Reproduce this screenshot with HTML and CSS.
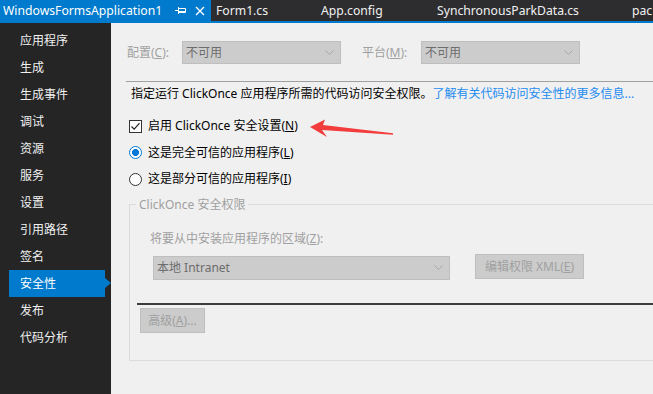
FILE: index.html
```html
<!DOCTYPE html>
<html>
<head>
	<meta charset="utf-8">
	<title>WindowsFormsApplication1 - 安全性</title>
	<link rel="stylesheet" href="styles.css">
</head>
<body>
	<div id="tabBar">
		<div class="tab activeTab">
			<span class="tabTitle">WindowsFormsApplication1</span>
			<svg class="tabIcon" width="12" height="10" viewBox="0 0 12 10">
				<path d="M0 4.5 H3.5 M3.5 1 V8 M3.5 2.5 H10.5 V6.5 H3.5 M3.5 5.5 H10.5" stroke="#fff" stroke-width="1" fill="none"/>
			</svg>
			<svg class="tabIcon closeIcon" width="10" height="10" viewBox="0 0 10 10">
				<path d="M1 1 L9 9 M9 1 L1 9" stroke="#fff" stroke-width="1.4" fill="none"/>
			</svg>
		</div>
		<div class="tab tabForm">Form1.cs</div>
		<div class="tab tabConfig">App.config</div>
		<div class="tab tabSync">SynchronousParkData.cs</div>
		<div class="tab">pac</div>
	</div>

	<div id="main">
		<ul id="sideMenu">
			<li>应用程序</li>
			<li>生成</li>
			<li>生成事件</li>
			<li>调试</li>
			<li>资源</li>
			<li>服务</li>
			<li>设置</li>
			<li>引用路径</li>
			<li>签名</li>
			<li class="selected">安全性</li>
			<li>发布</li>
			<li>代码分析</li>
		</ul>

		<div id="content">
			<div class="configRow">
				<span class="disabledLabel cfgLabel">配置(<u>C</u>):</span>
				<div class="comboBox">
					<span>不可用</span>
					<svg class="chevron" width="9" height="6" viewBox="0 0 9 6"><path d="M0.5 0.5 L4.5 4.5 L8.5 0.5" stroke="#a8a8a8" fill="none"/></svg>
				</div>
				<span class="disabledLabel platLabel">平台(<u>M</u>):</span>
				<div class="comboBox">
					<span>不可用</span>
					<svg class="chevron" width="9" height="6" viewBox="0 0 9 6"><path d="M0.5 0.5 L4.5 4.5 L8.5 0.5" stroke="#a8a8a8" fill="none"/></svg>
				</div>
			</div>

			<div class="separator"></div>

			<p class="description">指定运行 ClickOnce 应用程序所需的代码访问安全权限。<a href="#">了解有关代码访问安全性的更多信息...</a></p>

			<div class="optionRow checkRow">
				<span class="checkbox">
					<svg width="11" height="11" viewBox="0 0 11 11"><path d="M1.5 5.5 L4.2 8.2 L9.5 2.2" stroke="#222" stroke-width="1.2" fill="none"/></svg>
				</span>
				<span>启用 ClickOnce 安全设置(<u>N</u>)</span>
			</div>
			<div class="optionRow">
				<span class="radio radioOn"></span>
				<span>这是完全可信的应用程序(<u>L</u>)</span>
			</div>
			<div class="optionRow">
				<span class="radio"></span>
				<span>这是部分可信的应用程序(<u>I</u>)</span>
			</div>

			<fieldset class="permGroup">
				<legend>ClickOnce 安全权限</legend>
				<p class="disabledLabel zoneLabel">将要从中安装应用程序的区域(<u>Z</u>):</p>
				<div class="zoneRow">
					<div class="comboBox zoneCombo">
						<span>本地 Intranet</span>
						<svg class="chevron" width="9" height="6" viewBox="0 0 9 6"><path d="M0.5 0.5 L4.5 4.5 L8.5 0.5" stroke="#a8a8a8" fill="none"/></svg>
					</div>
					<button class="disabledButton xmlButton">编辑权限 XML(<u>E</u>)</button>
				</div>
				<div class="darkLine"></div>
				<button class="disabledButton advButton">高级(<u>A</u>)...</button>
			</fieldset>
		</div>
	</div>

	<!-- red annotation arrow drawn on top of the screenshot -->
	<svg id="arrow" width="100" height="26" viewBox="0 0 100 26">
		<polygon points="10,12 25,4.5 23,10 93,18.2 93,19.8 22,15 27,22" fill="#f33c3c"/>
	</svg>
</body>
</html>
```

FILE: styles.css
```css
html, body {
	margin: 0;
	padding: 0;
	height: 100%;
	overflow: hidden;
}

body {
	font-family: "Noto Sans", "Noto Sans CJK SC", sans-serif;
	font-size: 12px;
	background-color: #f0f0f0;
	position: relative;
}

/* tab strip */

#tabBar {
	display: flex;
	height: 21px;
	background-color: #2d2d30;
	border-bottom: 2px solid #007acc;
	white-space: nowrap;
	overflow: hidden;
}

.tab {
	flex: none;
	display: flex;
	align-items: center;
	padding-left: 5px;
	color: #f1f1f1;
	font-size: 12.2px;
}

.activeTab {
	width: 208px;
	padding-left: 3px;
	background-color: #007acc;
	color: #fff;
}

.tabTitle {
	width: 172px;
}

.tabIcon {
	display: block;
}

.closeIcon {
	margin-left: 8px;
}

.tabForm {
	width: 100px;
}

.tabConfig {
	width: 111px;
}

.tabSync {
	width: 190px;
}

/* main area */

#main {
	display: flex;
	height: 371px;
}

#sideMenu {
	list-style: none;
	margin: 0;
	padding: 4px 0 0 0;
	width: 111px;
	flex: none;
	background-color: #252526;
	color: #f1f1f1;
	font-size: 12px;
}

#sideMenu li {
	height: 27px;
	line-height: 27px;
	padding-left: 20px;
}

#sideMenu li.selected {
	position: relative;
	margin-left: 9px;
	margin-right: 6px;
	padding-left: 11px;
	background-color: #007acc;
	color: #fff;
}

#sideMenu li.selected:after {
	content: "";
	position: absolute;
	right: -6px;
	top: 8px;
	border-top: 5.5px solid transparent;
	border-bottom: 5.5px solid transparent;
	border-left: 6px solid #007acc;
}

#content {
	flex: 1;
	padding: 18px 0 0 15px;
	overflow: hidden;
	color: #000;
	line-height: 16px;
}

u {
	text-decoration: underline;
	text-underline-offset: 1px;
}

.disabledLabel {
	color: #a0a0a0;
}

.configRow {
	display: flex;
	align-items: center;
	height: 23px;
	padding-left: 1px;
}

.cfgLabel {
	width: 55px;
}

.platLabel {
	width: 59px;
	margin-left: 21px;
}

.comboBox {
	box-sizing: border-box;
	display: flex;
	align-items: center;
	justify-content: space-between;
	width: 159px;
	height: 23px;
	padding: 0 6px 0 3px;
	background-color: #cccccc;
	border: 1px solid #bfbfbf;
	color: #6d6d6d;
}

.chevron {
	display: block;
}

.separator {
	height: 1px;
	width: 600px;
	margin-top: 17px;
	background-color: #a0a0a0;
}

.description {
	margin: 4px 0 0 5px;
	white-space: nowrap;
}

.description a {
	color: #1e8cf0;
	text-decoration: none;
}

.optionRow {
	display: flex;
	align-items: center;
	height: 26.5px;
	margin-left: 3px;
}

.checkRow {
	margin-top: 11px;
}

.checkbox {
	box-sizing: border-box;
	width: 13px;
	height: 13px;
	border: 1px solid #333;
	background-color: #fff;
	margin-right: 6px;
	display: flex;
	align-items: center;
	justify-content: center;
}

.checkbox svg {
	display: block;
}

.radio {
	box-sizing: border-box;
	width: 13px;
	height: 13px;
	border: 1px solid #333;
	border-radius: 50%;
	background-color: #fff;
	margin-right: 6px;
}

.radioOn {
	border-color: #0078d7;
	background: radial-gradient(circle, #0078d7 0, #0078d7 3.2px, #fff 3.8px);
}

/* ClickOnce permissions group */

.permGroup {
	margin: 4px 0 0 3px;
	padding: 0 0 27px 0;
	width: 600px;
	min-width: 0;
	border: 1px solid #dcdcdc;
}

.permGroup legend {
	margin-left: 6px;
	padding: 0 3px;
	color: #a0a0a0;
	line-height: 16px;
}

.zoneLabel {
	margin: 18px 0 0 20px;
}

.zoneRow {
	display: flex;
	align-items: flex-start;
	margin-top: 7px;
}

.zoneCombo {
	width: 297px;
	height: 24px;
	margin: 2px 0 0 23px;
	padding-left: 3px;
}

.disabledButton {
	box-sizing: border-box;
	height: 25px;
	padding: 0;
	font-family: "Noto Sans", "Noto Sans CJK SC", sans-serif;
	font-size: 12px;
	color: #a0a0a0;
	background-color: #cccccc;
	border: 1px solid #bfbfbf;
}

.xmlButton {
	width: 109px;
	margin-left: 25px;
}

.darkLine {
	height: 2px;
	margin: 23px 0 0 7px;
	background-color: #3a3a3f;
}

.advButton {
	display: block;
	width: 65px;
	margin: 3px 0 0 10px;
}

#arrow {
	position: absolute;
	left: 300px;
	top: 115px;
}
```
